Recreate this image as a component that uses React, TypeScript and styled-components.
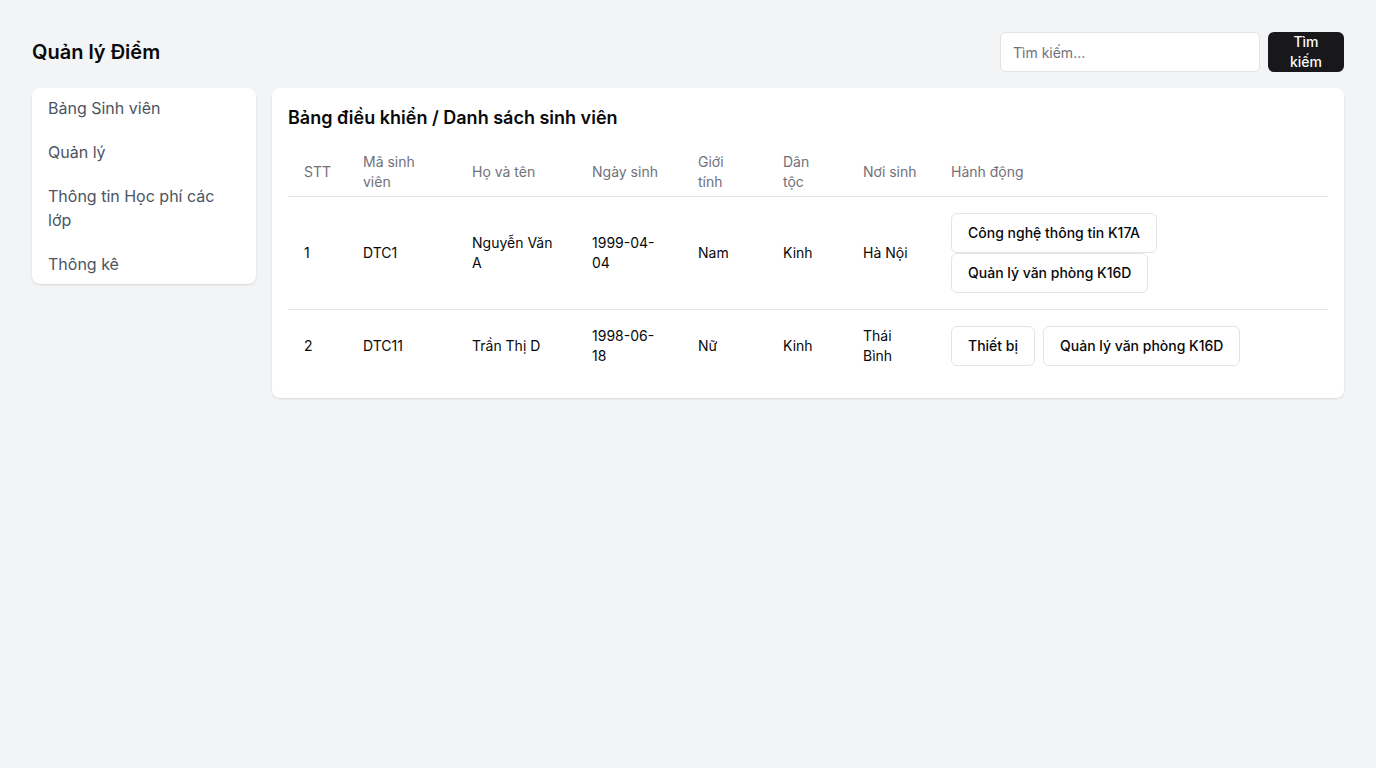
import React from 'react'
import styled, { createGlobalStyle } from 'styled-components'

const GlobalStyle = createGlobalStyle`
  * { box-sizing: border-box; }
  body {
    margin: 0;
    background: #f3f4f6;
    font-family: Inter, "Noto Sans", sans-serif;
    color: #09090b;
  }
`

const Page = styled.div`
  padding: 32px;
  min-height: 768px;
`

const Header = styled.header`
  display: flex;
  align-items: center;
  justify-content: space-between;
  height: 40px;
  margin-bottom: 16px;
`

const Title = styled.h1`
  margin: 0;
  font-size: 20px;
  line-height: 28px;
  font-weight: 600;
`

const SearchBox = styled.form`
  display: flex;
  gap: 8px;
`

const SearchInput = styled.input`
  width: 260px;
  height: 40px;
  padding: 0 12px;
  border: 1px solid #e4e4e7;
  border-radius: 6px;
  background: #fff;
  font-family: inherit;
  font-size: 14px;
  color: #09090b;
  outline: none;
  &::placeholder { color: #71717a; }
`

const DarkButton = styled.button`
  width: 76px;
  height: 40px;
  padding: 0 16px;
  border: none;
  border-radius: 6px;
  background: #18181b;
  color: #fafafa;
  font-family: inherit;
  font-size: 14px;
  line-height: 20px;
  font-weight: 500;
`

const Body = styled.div`
  display: flex;
  align-items: flex-start;
  gap: 16px;
`

const Sidebar = styled.nav`
  width: 224px;
  flex-shrink: 0;
  display: flex;
  flex-direction: column;
  gap: 4px;
  background: #fff;
  border-radius: 8px;
  box-shadow: 0 1px 3px rgba(0, 0, 0, 0.08), 0 1px 2px rgba(0, 0, 0, 0.04);
`

const NavItem = styled.a`
  display: block;
  padding: 8px 16px;
  font-size: 16px;
  line-height: 24px;
  color: #4b5563;
  text-decoration: none;
`

const Card = styled.main`
  flex: 1;
  background: #fff;
  border-radius: 8px;
  padding: 16px;
  box-shadow: 0 1px 3px rgba(0, 0, 0, 0.08), 0 1px 2px rgba(0, 0, 0, 0.04);
`

const CardTitle = styled.h2`
  margin: 0 0 16px;
  font-size: 18px;
  line-height: 28px;
  font-weight: 600;
`

const Table = styled.table`
  width: 100%;
  table-layout: fixed;
  border-collapse: collapse;
  font-size: 14px;
  line-height: 20px;
`

const Th = styled.th`
  height: 48px;
  padding: 0 16px;
  text-align: left;
  vertical-align: middle;
  font-weight: 400;
  color: #71717a;
  border-bottom: 1px solid #e4e4e7;
`

const Tr = styled.tr<{ $last?: boolean }>`
  border-bottom: ${p => (p.$last ? 'none' : '1px solid #e4e4e7')};
`

const Td = styled.td`
  padding: 16px;
  vertical-align: middle;
`

const Actions = styled.div`
  display: flex;
  flex-wrap: wrap;
  column-gap: 8px;
`

const OutlineButton = styled.button`
  height: 40px;
  padding: 0 16px;
  border: 1px solid #e4e4e7;
  border-radius: 6px;
  background: #fff;
  color: #09090b;
  font-family: inherit;
  font-size: 14px;
  font-weight: 500;
  white-space: nowrap;
`

const columns = [
  { label: 'STT', width: 59 },
  { label: 'Mã sinh viên', width: 109 },
  { label: 'Họ và tên', width: 120 },
  { label: 'Ngày sinh', width: 106 },
  { label: 'Giới tính', width: 85 },
  { label: 'Dân tộc', width: 80 },
  { label: 'Nơi sinh', width: 88 },
  { label: 'Hành động', width: 393 },
]

const students = [
  {
    stt: 1, code: 'DTC1', name: 'Nguyễn Văn A', birth: '1999-04-04', gender: 'Nam',
    ethnic: 'Kinh', place: 'Hà Nội', classes: ['Công nghệ thông tin K17A', 'Quản lý văn phòng K16D'],
  },
  {
    stt: 2, code: 'DTC11', name: 'Trần Thị D', birth: '1998-06-18', gender: 'Nữ',
    ethnic: 'Kinh', place: 'Thái Bình', classes: ['Thiết bị', 'Quản lý văn phòng K16D'],
  },
]

const menu = ['Bảng Sinh viên', 'Quản lý', 'Thông tin Học phí các lớp', 'Thông kê']

const App = () => (
  <Page>
    <GlobalStyle />
    <Header>
      <Title>Quản lý Điểm</Title>
      <SearchBox onSubmit={e => e.preventDefault()}>
        <SearchInput placeholder='Tìm kiếm...' />
        <DarkButton type='submit'>Tìm kiếm</DarkButton>
      </SearchBox>
    </Header>
    <Body>
      <Sidebar>
        {menu.map(item => <NavItem key={item} href='#'>{item}</NavItem>)}
      </Sidebar>
      <Card>
        <CardTitle>Bảng điều khiển / Danh sách sinh viên</CardTitle>
        <Table>
          <colgroup>
            {columns.map(c => <col key={c.label} style={{ width: c.width }} />)}
          </colgroup>
          <thead>
            <tr>
              {columns.map(c => <Th key={c.label}>{c.label}</Th>)}
            </tr>
          </thead>
          <tbody>
            {students.map((s, i) => (
              <Tr key={s.code} $last={i === students.length - 1}>
                <Td>{s.stt}</Td>
                <Td>{s.code}</Td>
                <Td>{s.name}</Td>
                <Td>{s.birth}</Td>
                <Td>{s.gender}</Td>
                <Td>{s.ethnic}</Td>
                <Td>{s.place}</Td>
                <Td>
                  <Actions>
                    {s.classes.map(c => <OutlineButton key={c}>{c}</OutlineButton>)}
                  </Actions>
                </Td>
              </Tr>
            ))}
          </tbody>
        </Table>
      </Card>
    </Body>
  </Page>
)

export default App
